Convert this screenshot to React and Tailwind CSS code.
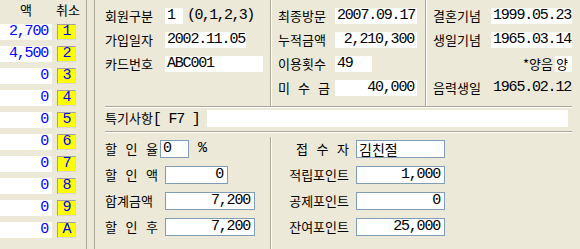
import React from "react";

const KR = "font-['Noto_Sans_CJK_KR',sans-serif]";
// digits in the reference are tall and narrow; a bigger mono face pulled together matches them
const MONO = "font-['Liberation_Mono','Noto_Sans_CJK_KR',monospace] text-[15px] tracking-[-1.2px]";

const leftRows = [
  ["2,700", "1"],
  ["4,500", "2"],
  ["0", "3"],
  ["0", "4"],
  ["0", "5"],
  ["0", "6"],
  ["0", "7"],
  ["0", "8"],
  ["0", "9"],
  ["0", "A"],
];

// label with characters spread over a fixed width ("할 인 율")
function Spread({ text, w }) {
  return (
    <span className={`flex justify-between ${w}`}>
      {text.split(" ").map((c, i) => (
        <span key={i}>{c}</span>
      ))}
    </span>
  );
}

function Field({ w, right, children }) {
  return (
    <div className={`h-[16px] bg-white ${w} ${MONO} leading-[16px] ${right ? "text-right pr-[3px]" : "pl-[2px]"}`}>
      {children}
    </div>
  );
}

function Box({ w, left, kr, children }) {
  return (
    <div
      className={`h-[18px] ${w} border border-[#7F9DB9] bg-white leading-[16px] ${kr ? KR + " text-[14px]" : MONO} ${
        left ? "pl-[2px]" : "text-right pr-[4px]"
      }`}
    >
      {children}
    </div>
  );
}

function VLine() {
  return <div className="w-[2px] shrink-0 border-l border-[#ACA899] border-r border-r-white" />;
}

function HLine() {
  return <div className="ml-[10px] mr-[8px] h-[2px] border-t border-[#ACA899] border-b border-b-white" />;
}

export default function App() {
  return (
    <div className={`flex w-[580px] h-[249px] overflow-hidden bg-[#ECE9D8] text-[13px] text-black ${KR}`}>
      {/* left list */}
      <div className="w-[86px] shrink-0 flex flex-col">
        <div className="flex items-center h-[24px] pb-[4px] leading-[14px]">
          <span className="w-[56px] pl-[20px]">액</span>
          <span>취소</span>
        </div>
        <div className="flex flex-col gap-[6px]">
          {leftRows.map(([v, k]) => (
            <div key={k} className="flex h-[16px]">
              <div className={`w-[52px] bg-white text-right pr-[4px] text-[#0000FF] leading-[16px] ${MONO}`}>{v}</div>
              <div className={`ml-[5px] w-[19px] bg-[#FFFF00] border-l border-t border-[#A0A0A0] border-r border-b border-r-[#D8D8D8] border-b-[#D8D8D8] text-center text-[#0000FF] leading-[14px] ${MONO}`}>
                {k}
              </div>
            </div>
          ))}
        </div>
      </div>

      {/* splitter */}
      <div className="w-[9px] shrink-0 border-l border-[#ACA899] border-r border-r-[#ACA899] bg-[#ECE9D8]" />

      {/* main panel */}
      <div className="flex-1 flex flex-col">
        <div className="flex h-[106px] leading-[14px]">
          <div className="w-[175px] shrink-0 pl-[10px] pt-[8px] flex flex-col gap-[8px]">
            <div className="flex items-center h-[16px]">
              <span className="w-[60px]">회원구분</span>
              <Field w="w-[18px]">1</Field>
              <span className={`ml-[4px] ${MONO} tracking-[-1.6px]`}>(0,1,2,3)</span>
            </div>
            <div className="flex items-center h-[16px]">
              <span className="w-[60px]">가입일자</span>
              <Field w="w-[81px]">2002.11.05</Field>
            </div>
            <div className="flex items-center h-[16px]">
              <span className="w-[60px]">카드번호</span>
              <Field w="w-[98px]">ABC001</Field>
            </div>
          </div>
          <VLine />
          <div className="w-[153px] shrink-0 pl-[6px] pt-[8px] flex flex-col gap-[8px]">
            <div className="flex items-center h-[16px]">
              <span className="w-[57px]">최종방문</span>
              <Field w="w-[82px]">2007.09.17</Field>
            </div>
            <div className="flex items-center h-[16px]">
              <span className="w-[57px]">누적금액</span>
              <Field w="w-[82px]" right>2,210,300</Field>
            </div>
            <div className="flex items-center h-[16px]">
              <span className="w-[57px]">이용횟수</span>
              <Field w="w-[37px]">49</Field>
            </div>
            <div className="flex items-center h-[16px]">
              <span className="w-[57px]"><Spread text="미 수 금" w="w-[52px]" /></span>
              <Field w="w-[82px]" right>40,000</Field>
            </div>
          </div>
          <VLine />
          <div className="flex-1 pl-[6px] pr-[8px] pt-[8px] flex flex-col gap-[8px]">
            <div className="flex items-center h-[16px]">
              <span className="w-[58px]">결혼기념</span>
              <Field w="w-[81px]">1999.05.23</Field>
            </div>
            <div className="flex items-center h-[16px]">
              <span className="w-[58px]">생일기념</span>
              <Field w="w-[81px]">1965.03.14</Field>
            </div>
            <div className="flex items-center justify-end h-[16px]">
              <span className="mr-[2px]">*양음</span>
              <div className="w-[17px] h-[16px] bg-white pl-[1px] leading-[16px]">양</div>
            </div>
            <div className="flex items-center h-[16px]">
              <span className="w-[58px]">음력생일</span>
              <span className={`pl-[2px] ${MONO}`}>1965.02.12</span>
            </div>
          </div>
        </div>

        <HLine />

        <div className="flex items-center h-[17px] mt-[2px] pl-[10px] leading-[14px]">
          <span className="w-[102px] shrink-0">
            특기사항<span className={MONO}>[ F7 ]</span>
          </span>
          <div className="w-[361px] h-[17px] bg-white" />
        </div>

        <div className="mt-[4px]">
          <HLine />
        </div>

        <div className="flex flex-1 leading-[14px]">
          <div className="w-[175px] shrink-0 pl-[10px] pt-[7px] flex flex-col gap-[8px]">
            <div className="flex items-center h-[18px]">
              <span className="w-[55px]"><Spread text="할 인 율" w="w-[53px]" /></span>
              <Box w="w-[29px]" left>0</Box>
              <span className={`ml-[9px] ${MONO}`}>%</span>
            </div>
            <div className="flex items-center h-[18px]">
              <span className="w-[60px]"><Spread text="할 인 액" w="w-[53px]" /></span>
              <Box w="w-[63px]">0</Box>
            </div>
            <div className="flex items-center h-[18px]">
              <span className="w-[60px]">합계금액</span>
              <Box w="w-[90px]">7,200</Box>
            </div>
            <div className="flex items-center h-[18px]">
              <span className="w-[60px]"><Spread text="할 인 후" w="w-[53px]" /></span>
              <Box w="w-[90px]">7,200</Box>
            </div>
          </div>
          <div className="mt-[4px] flex">
            <VLine />
          </div>
          <div className="flex-1 pt-[7px] flex flex-col gap-[8px]">
            <div className="flex items-center h-[18px]">
              <span className="w-[84px] pr-[7px] flex justify-end">
                <Spread text="접 수 자" w="w-[53px]" />
              </span>
              <Box w="w-[89px]" left kr>김친절</Box>
            </div>
            <div className="flex items-center h-[18px]">
              <span className="w-[84px] pr-[7px] text-right">적립포인트</span>
              <Box w="w-[89px]">1,000</Box>
            </div>
            <div className="flex items-center h-[18px]">
              <span className="w-[84px] pr-[7px] text-right">공제포인트</span>
              <Box w="w-[89px]">0</Box>
            </div>
            <div className="flex items-center h-[18px]">
              <span className="w-[84px] pr-[7px] text-right">잔여포인트</span>
              <Box w="w-[89px]">25,000</Box>
            </div>
          </div>
        </div>
      </div>
    </div>
  );
}
